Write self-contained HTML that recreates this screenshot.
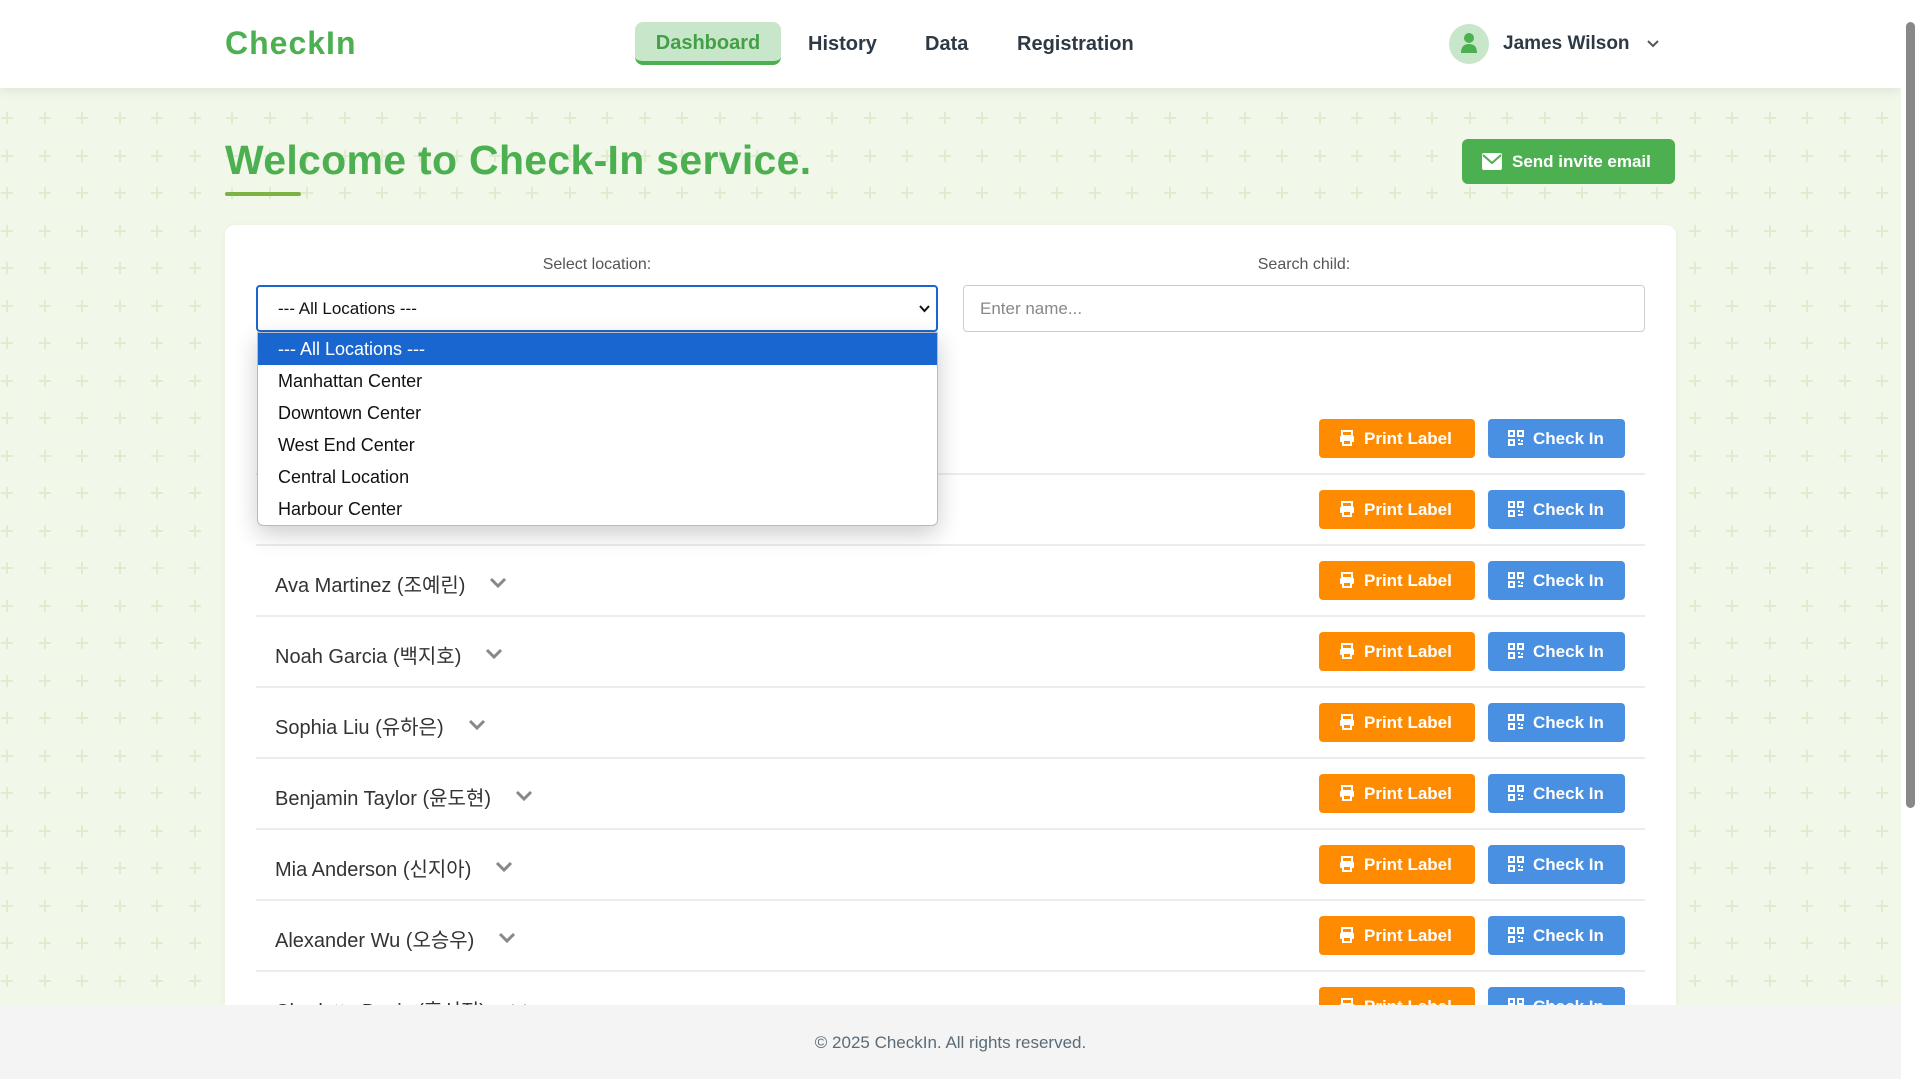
<!DOCTYPE html>
<html style="width:1919px;height:1079px;overflow:hidden"><head><meta charset="utf-8"><style>
*{box-sizing:border-box;margin:0;padding:0}
body{width:1919px;height:1079px;overflow:hidden;font-family:"Liberation Sans","Noto Sans CJK KR",sans-serif;background:#f1f7e9;position:relative;color:#222}
.bg{position:absolute;left:0;top:88px;width:1901px;height:991px;background-color:#f1f7e9;background-repeat:no-repeat}
.hdr{position:absolute;left:0;top:0;width:1901px;height:88px;background:#fff;box-shadow:0 3px 10px rgba(0,0,0,.08);z-index:3}
.logo{position:absolute;left:225px;top:25px;font-size:32px;font-weight:bold;color:#4caf50;letter-spacing:1px}
.nav{position:absolute;top:22px;height:43px;font-size:20px;font-weight:bold;color:#2d3a45;line-height:45px}
.dash{left:635px;width:146px;background:#c8e6c9;color:#43a047;border-radius:8px;text-align:center;border-bottom:4px solid #4caf50;line-height:43px}
.av{position:absolute;left:1449px;top:24px;width:40px;height:40px;border-radius:50%;background:#c8e6c9}
.user{position:absolute;left:1503px;top:33px;font-size:19px;font-weight:bold;color:#2d3a45}
.title{position:absolute;left:225px;top:137px;font-size:41px;font-weight:bold;color:#4caf50;letter-spacing:.3px}
.uline{position:absolute;left:225px;top:192px;width:76px;height:4px;background:#7cb342;border-radius:2px}
.send{position:absolute;left:1462px;top:139px;width:213px;height:45px;background:#4caf50;border-radius:6px;color:#fff;font-weight:bold;font-size:17px;line-height:45px;padding-left:50px}
.card{position:absolute;left:225px;top:225px;width:1451px;height:780px;background:#fff;border-radius:10px 10px 0 0;box-shadow:0 2px 8px rgba(0,0,0,.05)}
.lbl{position:absolute;top:256px;font-size:16px;color:#555;text-align:center;width:682px}
.sel{position:absolute;left:256px;top:285px;width:682px;height:47px;border:2px solid #1a66d0;border-radius:4px;background:#fff;font-size:17px;line-height:43px;padding-left:20px;color:#111}
.inp{position:absolute;left:963px;top:285px;width:682px;height:47px;border:1px solid #ccc;border-radius:4px;font-size:17px;line-height:45px;padding-left:16px;color:#888}
.dd{position:absolute;left:257px;top:332px;width:681px;height:194px;background:#fff;border:1px solid #bbb;border-radius:0 0 6px 6px;box-shadow:0 8px 24px rgba(0,0,0,.2);z-index:2;font-size:18px;color:#111}
.dd div{height:32px;line-height:32px;padding-left:20px}
.dd .on{background:#1a66d0;color:#fff}
.sep{position:absolute;left:256px;width:1389px;height:2px;background:#ececec}
.nm{position:absolute;left:275px;font-size:20px;color:#333}
.nm svg{margin-left:24px;vertical-align:3px}
.pb{position:absolute;left:1319px;width:156px;height:39px;background:#ff8c00;border-radius:4px;color:#fff;font-weight:bold;font-size:17px;line-height:39px;padding-left:45px}
.cb{position:absolute;left:1488px;width:137px;height:39px;background:#4a90e2;border-radius:4px;color:#fff;font-weight:bold;font-size:17px;line-height:39px;padding-left:45px}
.pb svg,.cb svg{position:absolute;left:20px;top:11px}
.ft{position:absolute;left:0;top:1005px;width:1901px;height:74px;background:#f4f4f4;z-index:4;text-align:center;font-size:17px;color:#5a6b78;line-height:76px}
.sb{position:absolute;left:1901px;top:0;width:18px;height:1079px;background:#fff;z-index:5}
.sb div{position:absolute;left:5px;top:22px;width:9px;height:786px;background:#888;border-radius:5px}
</style></head><body>
<div class="bg" id="bg"></div>
<div class="hdr">
<div class="logo">CheckIn</div>
<div class="nav dash">Dashboard</div>
<div class="nav" style="left:808px">History</div>
<div class="nav" style="left:925px">Data</div>
<div class="nav" style="left:1017px">Registration</div>
<div class="av"><svg width="40" height="40"><circle cx="20" cy="14" r="5" fill="#4caf50"/><path d="M12 29 Q12 20 20 20 Q28 20 28 29 Z" fill="#4caf50"/></svg></div>
<div class="user">James Wilson</div>
<svg style="position:absolute;left:1646px;top:39px" width="14" height="10"><path d="M2 2 L7 7 L12 2" stroke="#555" stroke-width="2" fill="none"/></svg>
</div>
<div class="title">Welcome to Check-In service.</div>
<div class="uline"></div>
<div class="send"><svg style="position:absolute;left:20px;top:14px" width="20" height="17"><rect x="0" y="0" width="20" height="17" rx="2" fill="#fff"/><path d="M1 2 L10 10 L19 2" stroke="#4caf50" stroke-width="2" fill="none"/></svg>Send invite email</div>
<div class="card"></div>
<div class="lbl" style="left:256px">Select location:</div>
<div class="lbl" style="left:963px">Search child:</div>
<div class="sel">--- All Locations ---<svg style="position:absolute;right:6px;top:18px" width="11" height="8"><path d="M1 1 L5.5 6 L10 1" stroke="#111" stroke-width="2" fill="none"/></svg></div>
<div class="inp">Enter name...</div>
<div class="dd"><div class="on">--- All Locations ---</div><div>Manhattan Center</div><div>Downtown Center</div><div>West End Center</div><div>Central Location</div><div>Harbour Center</div></div>
<div id="rows"></div>
<div class="ft">© 2025 CheckIn. All rights reserved.</div>
<div class="sb"><div></div></div>
<script>
var bg=document.getElementById('bg'),im=[],sz=[],pos=[];
for(var y=30;y<920;y+=37.5)for(var x=7;x<1900;x+=37.5){im.push('linear-gradient(#dfecd0,#dfecd0)','linear-gradient(#dfecd0,#dfecd0)');sz.push('2px 12px','12px 2px');pos.push((x-1)+'px '+(y-6)+'px',(x-6)+'px '+(y-1)+'px');}
bg.style.backgroundImage=im.join(',');bg.style.backgroundSize=sz.join(',');bg.style.backgroundPosition=pos.join(',');
var names=['Liam Johnson (김민준)','Olivia Smith (이서연)','Ava Martinez (조예린)','Noah Garcia (백지호)','Sophia Liu (유하은)','Benjamin Taylor (윤도현)','Mia Anderson (신지아)','Alexander Wu (오승우)','Charlotte Davis (홍서진)'];
var h='',chev='<svg width="18" height="12"><path d="M2 2 L9 9 L16 2" stroke="#888" stroke-width="3" fill="none"/></svg>';
var pr='<svg width="16" height="16"><rect x="3" y="1" width="10" height="5" fill="none" stroke="#fff" stroke-width="2"/><rect x="1" y="6" width="14" height="6" rx="1" fill="#fff"/><rect x="4" y="10" width="8" height="5" fill="#ff8c00" stroke="#fff" stroke-width="2"/></svg>';
var qr='<svg width="16" height="16" fill="none" stroke="#fff" stroke-width="2"><rect x="1" y="1" width="5" height="5"/><rect x="10" y="1" width="5" height="5"/><rect x="1" y="10" width="5" height="5"/><path d="M10 10h2M14 10v2M10 14h5" /></svg>';
for(var i=0;i<9;i++){var c=438+i*71;
h+='<div class="nm" style="top:'+(c-11)+'px">'+names[i]+chev+'</div>';
h+='<div class="pb" style="top:'+(c-19)+'px">'+pr+'Print Label</div>';
h+='<div class="cb" style="top:'+(c-19)+'px">'+qr+'Check In</div>';
if(i<8)h+='<div class="sep" style="top:'+(c+35)+'px"></div>';}
document.getElementById('rows').innerHTML=h;
</script>
</body></html>
